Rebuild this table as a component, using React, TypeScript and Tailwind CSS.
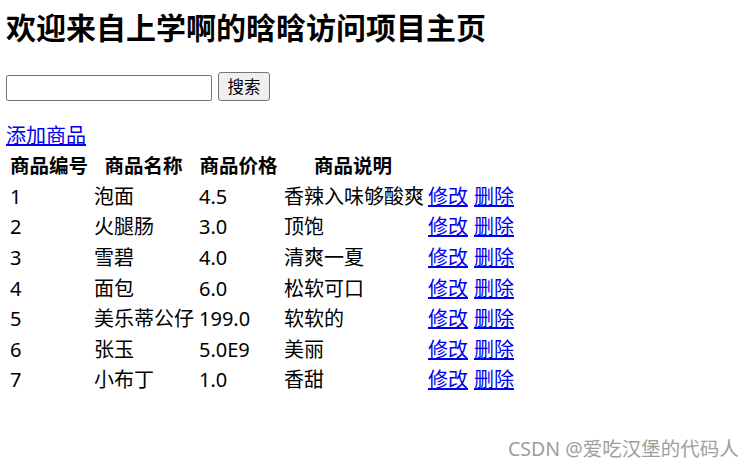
import React from 'react'

const goods = [
  { id: '1', name: '泡面', price: '4.5', desc: '香辣入味够酸爽' },
  { id: '2', name: '火腿肠', price: '3.0', desc: '顶饱' },
  { id: '3', name: '雪碧', price: '4.0', desc: '清爽一夏' },
  { id: '4', name: '面包', price: '6.0', desc: '松软可口' },
  { id: '5', name: '美乐蒂公仔', price: '199.0', desc: '软软的' },
  { id: '6', name: '张玉', price: '5.0E9', desc: '美丽' },
  { id: '7', name: '小布丁', price: '1.0', desc: '香甜' },
]

const cols = 'grid grid-cols-[78px_99px_79px_138px_auto] gap-x-[6px] items-center'
const headers = ['商品编号', '商品名称', '商品价格', '商品说明']

const App = () => {
  return (
    <div
      className="relative w-[755px] h-[469px] bg-white text-black overflow-hidden"
      style={{ fontFamily: '"Noto Sans", "Noto Sans CJK SC", sans-serif' }}
    >
      <h2 className="pt-[8px] pl-[6px] h-[48px] text-[30px] leading-[40px] font-bold">
        欢迎来自上学啊的晗晗访问项目主页
      </h2>

      {/* search */}
      <div className="flex items-end gap-[6px] pl-[6px] pt-[24px]">
        <input
          type="text"
          className="w-[206px] h-[26px] border border-[#767676] rounded-[2px] bg-white outline-none"
        />
        <button className="w-[52px] h-[29px] border border-[#767676] rounded-[3px] bg-[#efefef] text-[16.5px] leading-[27px]">
          搜索
        </button>
      </div>

      <div className="pl-[6px] pt-[20px] h-[50px] text-[20px] leading-[30px]">
        <a href="#" className="text-[#0000ee] underline">添加商品</a>
      </div>

      {/* table */}
      <div className="pl-[10px] text-[20px] leading-[26px]">
        <div className={cols + ' h-[30.6px] font-bold'}>
          {headers.map((h) => (
            <div key={h} className="flex justify-center whitespace-nowrap text-[19.5px]">
              {h}
            </div>
          ))}
          <div />
        </div>
        {goods.map((g) => (
          <div key={g.id} className={cols + ' h-[30.6px]'}>
            <div>{g.id}</div>
            <div className="whitespace-nowrap">{g.name}</div>
            <div>{g.price}</div>
            <div className="whitespace-nowrap">{g.desc}</div>
            <div className="flex gap-[6px] whitespace-nowrap">
              <a href="#" className="text-[#0000ee] underline">修改</a>
              <a href="#" className="text-[#0000ee] underline">删除</a>
            </div>
          </div>
        ))}
      </div>

      {/* watermark */}
      <div className="absolute left-[508px] top-[437px] text-[19.5px] leading-[24px] text-[#9e9e9e] whitespace-nowrap">
        CSDN @爱吃汉堡的代码人
      </div>
    </div>
  )
}

export default App
